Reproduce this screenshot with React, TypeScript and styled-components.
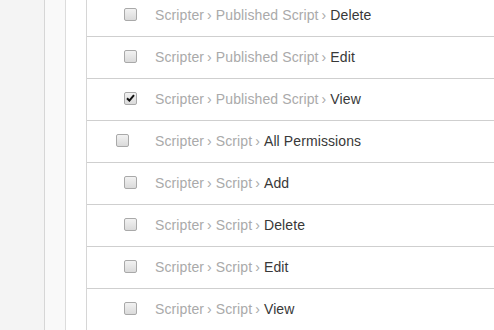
import styled, { createGlobalStyle } from 'styled-components';

const GlobalStyle = createGlobalStyle`
    html, body {
        margin: 0;
        padding: 0;
        background: #fff;
        overflow: hidden;
    }
    body {
        font-family: 'Liberation Sans', Arial, sans-serif;
    }
`;

const Page = styled.div`
    display: flex;
    height: 330px;
    width: 494px;
    overflow: hidden;
`;

const Sidebar = styled.div`
    width: 44px;
    flex-shrink: 0;
    background: #f4f4f4;
    border-right: 1px solid #d6d6d6;
`;

const Gutter = styled.div`
    width: 20px;
    flex-shrink: 0;
    background: #f9f9f9;
    border-right: 1px solid #dcdcdc;
`;

const Content = styled.div`
    flex: 1;
    padding-left: 20px;
    overflow: hidden;
`;

const Table = styled.div`
    margin-top: -5px;
    border-left: 1px solid #d6d6d6;
`;

const Row = styled.div`
    display: grid;
    grid-template-columns: 68px 1fr;
    align-items: center;
    height: 41px;
    border-bottom: 1px solid #cfcfcf;
`;

const CheckCell = styled.div<{ $indent: number }>`
    padding-left: ${({ $indent }) => $indent}px;
    display: flex;
    align-items: center;
`;

const Box = styled.span`
    display: inline-flex;
    align-items: center;
    justify-content: center;
    box-sizing: border-box;
    width: 13px;
    height: 13px;
    border: 1px solid #a9a9a9;
    border-radius: 2px;
    background: linear-gradient(#f2f2f2, #dadada);
    margin-top: -3px;
`;

const Label = styled.div`
    font-size: 14px;
    color: #aaa;
    white-space: nowrap;
    margin-top: -1px;
    letter-spacing: 0.1px;
`;

const Sep = styled.span`
    margin: 0 4px 0 3px;
    color: #aaa;
`;

const Leaf = styled.span`
    color: #383838;
`;

type Perm = { path: string[]; leaf: string; checked?: boolean; group?: boolean };

const perms: Perm[] = [
    { path: ['Scripter', 'Published Script'], leaf: 'Delete' },
    { path: ['Scripter', 'Published Script'], leaf: 'Edit' },
    { path: ['Scripter', 'Published Script'], leaf: 'View', checked: true },
    { path: ['Scripter', 'Script'], leaf: 'All Permissions', group: true },
    { path: ['Scripter', 'Script'], leaf: 'Add' },
    { path: ['Scripter', 'Script'], leaf: 'Delete' },
    { path: ['Scripter', 'Script'], leaf: 'Edit' },
    { path: ['Scripter', 'Script'], leaf: 'View' },
];

function Checkbox({ checked }: { checked?: boolean }) {
    return (
        <Box>
            {checked && (
                <svg width="9" height="8" viewBox="0 0 9 8">
                    <path d="M1 4.2 L3.4 6.6 L8 1.2" fill="none" stroke="#111" strokeWidth="2" />
                </svg>
            )}
        </Box>
    );
}

export default function App() {
    return (
        <Page>
            <GlobalStyle />
            <Sidebar />
            <Gutter />
            <Content>
                <Table>
                    {perms.map((p, i) => (
                        <Row key={i}>
                            <CheckCell $indent={p.group ? 29 : 37}>
                                <Checkbox checked={p.checked} />
                            </CheckCell>
                            <Label>
                                {p.path.map((part) => (
                                    <span key={part}>
                                        {part}
                                        <Sep>›</Sep>
                                    </span>
                                ))}
                                <Leaf>{p.leaf}</Leaf>
                            </Label>
                        </Row>
                    ))}
                </Table>
            </Content>
        </Page>
    );
}
